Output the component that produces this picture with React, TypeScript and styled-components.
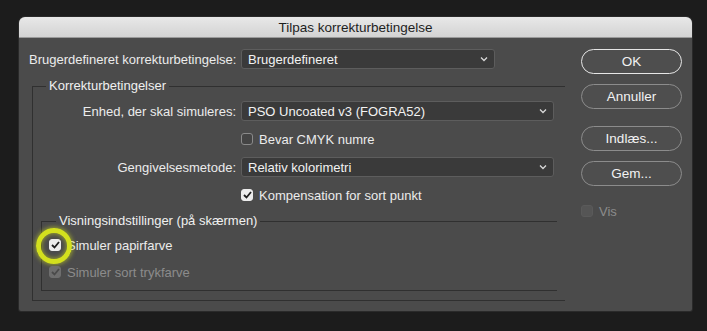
import React from "react";
import styled, { createGlobalStyle } from "styled-components";

const Global = createGlobalStyle`
  html, body { margin: 0; padding: 0; background: #1c1c1c; }
  body { font-family: "Liberation Sans", Arial, sans-serif; font-size: 13px; }
  * { box-sizing: border-box; }
`;

const Page = styled.div`
  width: 707px;
  height: 331px;
  padding: 17px 0 0 19px;
  background: #1c1c1c;
`;

const Dialog = styled.div`
  width: 673px;
  height: 294px;
  background: #4b4b4b;
  border-radius: 6px 6px 2px 2px;
  overflow: hidden;
  display: flex;
  flex-direction: column;
  box-shadow: 0 0 0 1px #2a2a2a;
`;

const TitleBar = styled.div`
  height: 21px;
  flex: none;
  background: linear-gradient(#e8e8e8, #d3d3d3);
  border-bottom: 1px solid #9a9a9a;
  color: #1e1e1e;
  font-size: 13.5px;
  display: flex;
  align-items: center;
  justify-content: center;
`;

const Body = styled.div`
  display: flex;
  padding: 11px 10px 0 10px;
`;

const Main = styled.div`
  width: 536px;
  display: flex;
  flex-direction: column;
`;

const Side = styled.div`
  width: 101px;
  margin-left: 16px;
  display: flex;
  flex-direction: column;
`;

const FormRow = styled.div<{ $labelWidth: number }>`
  display: grid;
  grid-template-columns: ${(p) => p.$labelWidth}px auto;
  column-gap: 5px;
  align-items: center;
  height: 20px;
`;

const Label = styled.span<{ $right?: boolean }>`
  color: #ececec;
  text-align: ${(p) => (p.$right ? "right" : "left")};
  white-space: nowrap;
`;

const SelectBox = styled.div<{ $width: number }>`
  width: ${(p) => p.$width}px;
  height: 20px;
  background: #3a3a3a;
  border: 1px solid #5d5d5d;
  border-radius: 3px;
  color: #f2f2f2;
  display: flex;
  align-items: center;
  justify-content: space-between;
  padding: 0 6px 0 6px;
`;

const Chevron = () => (
  <svg width="8" height="6" viewBox="0 0 8 6">
    <polyline points="1,1.5 4,4.5 7,1.5" fill="none" stroke="#d8d8d8" strokeWidth="1.3" />
  </svg>
);

const Select = ({ value, width }: { value: string; width: number }) => (
  <SelectBox $width={width}>
    <span>{value}</span>
    <Chevron />
  </SelectBox>
);

const Fieldset = styled.fieldset<{ $ml: number; $width: number; $mt: number; $pb: number }>`
  margin: ${(p) => p.$mt}px 0 0 ${(p) => p.$ml}px;
  width: ${(p) => p.$width}px;
  padding: 0 0 ${(p) => p.$pb}px 0;
  border: 1px solid #303030;
  border-right: none;
  min-inline-size: 0;
`;

const Legend = styled.legend<{ $ml: number }>`
  margin-left: ${(p) => p.$ml}px;
  padding: 0 3px;
  line-height: 16px;
  color: #f0f0f0;
  white-space: nowrap;
`;

const Rows = styled.div<{ $pt: number; $pl: number; $gap: number }>`
  display: flex;
  flex-direction: column;
  gap: ${(p) => p.$gap}px;
  padding: ${(p) => p.$pt}px 0 0 ${(p) => p.$pl}px;
`;

const CheckRow = styled.label<{ $disabled?: boolean }>`
  position: relative;
  display: flex;
  align-items: center;
  gap: 6px;
  height: 20px;
  color: ${(p) => (p.$disabled ? "#8c8c8c" : "#ececec")};
`;

const Box = styled.span<{ $checked?: boolean; $disabled?: boolean }>`
  width: 12px;
  height: 12px;
  border-radius: 3px;
  flex: none;
  display: flex;
  align-items: center;
  justify-content: center;
  background: ${(p) =>
    p.$checked ? (p.$disabled ? "#6e6e6e" : "#ececec") : p.$disabled ? "#555555" : "#444444"};
  border: 1px solid
    ${(p) => (p.$checked ? (p.$disabled ? "#6e6e6e" : "#ececec") : p.$disabled ? "#5a5a5a" : "#8a8a8a")};
`;

const Highlight = styled.span`
  position: absolute;
  left: -13px;
  top: -7px;
  width: 36px;
  height: 36px;
  border-radius: 50%;
  border: 5px solid #d3e01e;
  box-shadow: 0 0 4px 1px rgba(214, 227, 28, 0.55), inset 0 0 4px 1px rgba(214, 227, 28, 0.5);
  pointer-events: none;
`;

const Check = ({ color }: { color: string }) => (
  <svg width="9" height="8" viewBox="0 0 9 8">
    <polyline points="1,4 3.5,6.5 8,1" fill="none" stroke={color} strokeWidth="1.8" />
  </svg>
);

const Checkbox = ({
  label,
  checked,
  disabled,
  highlight,
}: {
  label: string;
  checked?: boolean;
  disabled?: boolean;
  highlight?: boolean;
}) => (
  <CheckRow $disabled={disabled}>
    <Box $checked={checked} $disabled={disabled}>
      {checked && <Check color={disabled ? "#4a4a4a" : "#1e1e1e"} />}
    </Box>
    {highlight && <Highlight />}
    <span>{label}</span>
  </CheckRow>
);

const Button = styled.div<{ $primary?: boolean; $mt: number }>`
  height: 25px;
  margin-top: ${(p) => p.$mt}px;
  border-radius: 13px;
  border: ${(p) => (p.$primary ? "1.5px solid #e6e6e6" : "1px solid #8c8c8c")};
  background: #4e4e4e;
  color: #f2f2f2;
  font-size: 13.5px;
  display: flex;
  align-items: center;
  justify-content: center;
`;

const VisRow = styled.div`
  margin-top: 15px;
`;

export default function App() {
  return (
    <Page>
      <Global />
      <Dialog>
        <TitleBar>Tilpas korrekturbetingelse</TitleBar>
        <Body>
          <Main>
            <FormRow $labelWidth={207}>
              <Label>Brugerdefineret korrekturbetingelse:</Label>
              <Select value="Brugerdefineret" width={254} />
            </FormRow>
            <Fieldset $ml={3} $width={533} $mt={9} $pb={9}>
              <Legend $ml={13}>Korrekturbetingelser</Legend>
              <Rows $pt={7} $pl={0} $gap={8}>
                <FormRow $labelWidth={203}>
                  <Label $right>Enhed, der skal simuleres:</Label>
                  <Select value="PSO Uncoated v3 (FOGRA52)" width={313} />
                </FormRow>
                <FormRow $labelWidth={203}>
                  <span />
                  <Checkbox label="Bevar CMYK numre" />
                </FormRow>
                <FormRow $labelWidth={203}>
                  <Label $right>Gengivelsesmetode:</Label>
                  <Select value="Relativ kolorimetri" width={313} />
                </FormRow>
                <FormRow $labelWidth={203}>
                  <span />
                  <Checkbox label="Kompensation for sort punkt" checked />
                </FormRow>
              </Rows>
              <Fieldset $ml={8} $width={516} $mt={8} $pb={8}>
                <Legend $ml={14}>Visningsindstillinger (på skærmen)</Legend>
                <Rows $pt={6} $pl={7} $gap={7}>
                  <Checkbox label="Simuler papirfarve" checked highlight />
                  <Checkbox label="Simuler sort trykfarve" checked disabled />
                </Rows>
              </Fieldset>
            </Fieldset>
          </Main>
          <Side>
            <Button $primary $mt={0}>OK</Button>
            <Button $mt={10}>Annuller</Button>
            <Button $mt={17}>Indlæs...</Button>
            <Button $mt={10}>Gem...</Button>
            <VisRow>
              <Checkbox label="Vis" disabled />
            </VisRow>
          </Side>
        </Body>
      </Dialog>
    </Page>
  );
}
